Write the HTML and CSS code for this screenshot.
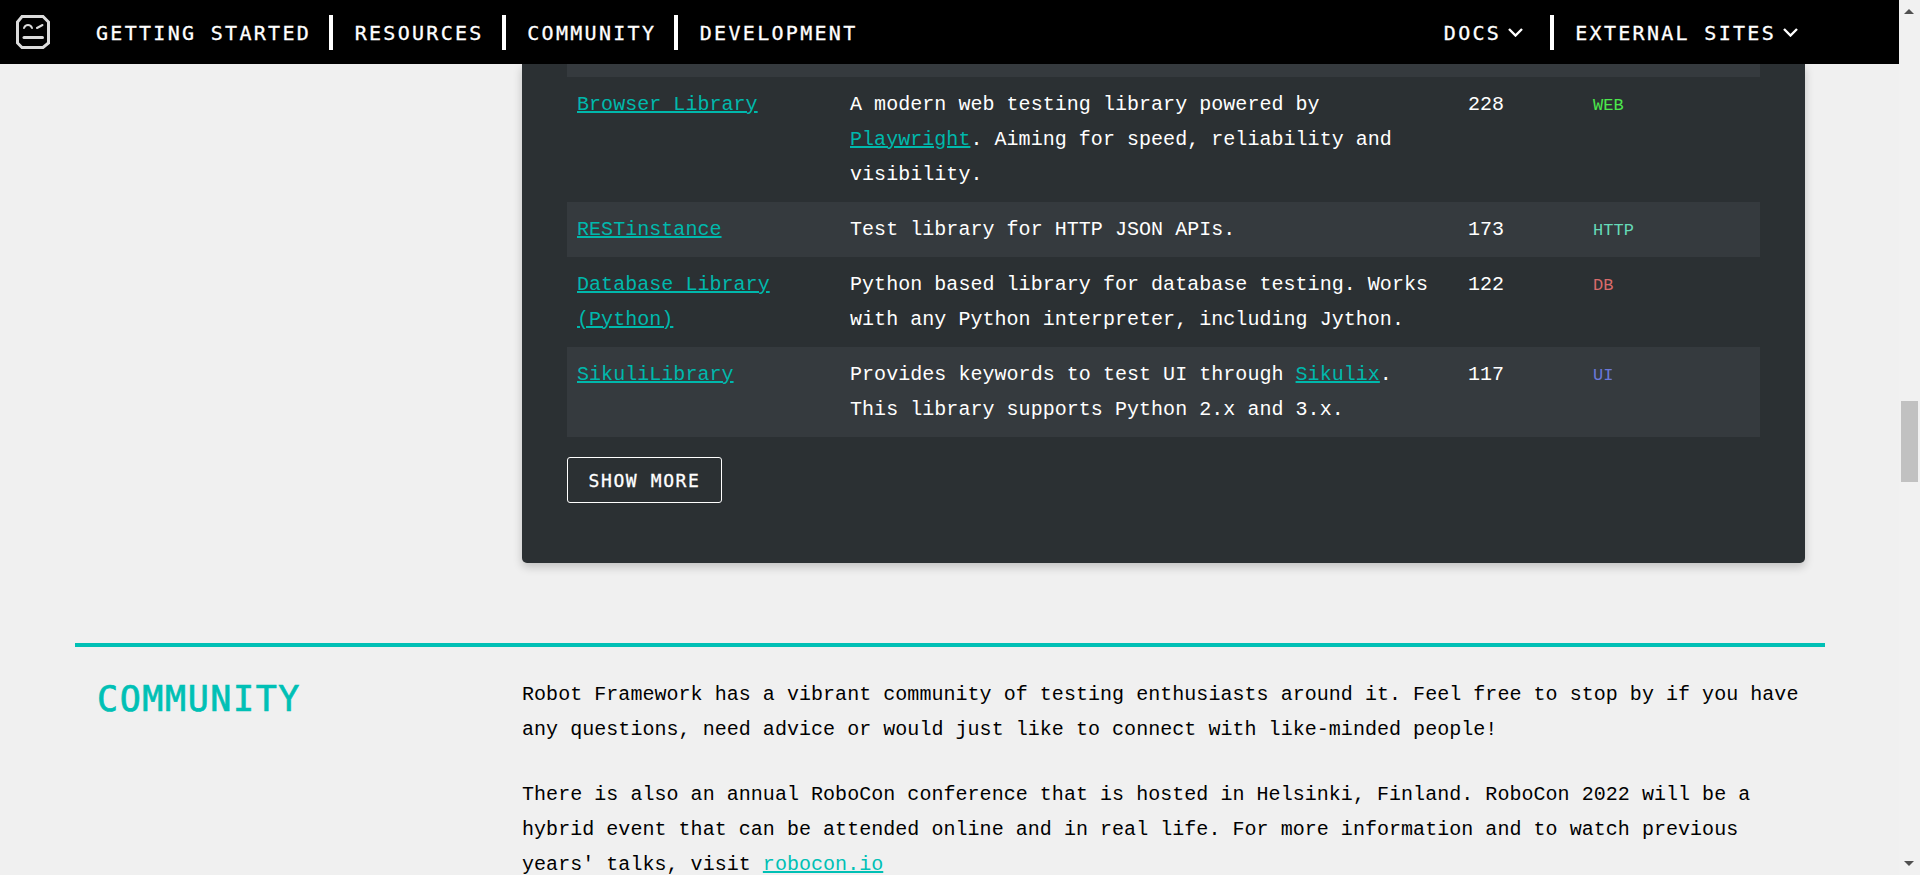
FILE: index.html
```html
<!DOCTYPE html>
<html lang="en">

<head>
    <meta charset="UTF-8">
    <meta name="viewport" content="width=device-width, initial-scale=1.0">
    <title>Robot Framework</title>
    <link rel="stylesheet" href="styles.css">
</head>

<body>
    <div class="page">
        <header class="navbar">
            <a class="logo" href="#">
                <svg width="36" height="36" viewBox="0 0 36 36" fill="none" stroke="#dcdcdc" stroke-linecap="round">
                    <path d="M7 2.5 H28 L33.5 8 V29 L28 33.5 H7 L2.5 29 V8 Z" stroke-width="3"></path>
                    <path d="M9 14 C10.5 10 15.5 10 17 14" stroke-width="2"></path>
                    <path d="M22 14 L27.5 11" stroke-width="2"></path>
                    <path d="M9 23.5 H27.5" stroke-width="3"></path>
                </svg>
            </a>
            <nav class="nav-left">
                <a href="#">Getting Started</a>
                <a href="#">Resources</a>
                <a href="#">Community</a>
                <a href="#">Development</a>
            </nav>
            <nav class="nav-right">
                <a href="#">Docs
                    <svg width="15" height="9" viewBox="0 0 15 9" fill="none" stroke="#fff" stroke-width="2.4"><path d="M1 1 L7.5 7.5 L14 1"></path></svg>
                </a>
                <a href="#">External Sites
                    <svg width="15" height="9" viewBox="0 0 15 9" fill="none" stroke="#fff" stroke-width="2.4"><path d="M1 1 L7.5 7.5 L14 1"></path></svg>
                </a>
            </nav>
        </header>

        <main class="content">
            <div class="card">
                <table class="lib-table">
                    <colgroup>
                        <col class="col-name">
                        <col class="col-desc">
                        <col class="col-stars">
                        <col class="col-tag">
                    </colgroup>
                    <tbody>
                        <tr class="row-cut">
                            <td colspan="4"></td>
                        </tr>
                        <tr>
                            <td><a href="#">Browser Library</a></td>
                            <td>A modern web testing library powered by <a href="#">Playwright</a>. Aiming for speed, reliability and visibility.</td>
                            <td>228</td>
                            <td><span class="tag tag-web">WEB</span></td>
                        </tr>
                        <tr>
                            <td><a href="#">RESTinstance</a></td>
                            <td>Test library for HTTP JSON APIs.</td>
                            <td>173</td>
                            <td><span class="tag tag-http">HTTP</span></td>
                        </tr>
                        <tr>
                            <td><a href="#">Database Library (Python)</a></td>
                            <td>Python based library for database testing. Works with any Python interpreter, including Jython.</td>
                            <td>122</td>
                            <td><span class="tag tag-db">DB</span></td>
                        </tr>
                        <tr>
                            <td><a href="#">SikuliLibrary</a></td>
                            <td>Provides keywords to test UI through <a href="#">Sikulix</a>. This library supports Python 2.x and 3.x.</td>
                            <td>117</td>
                            <td><span class="tag tag-ui">UI</span></td>
                        </tr>
                    </tbody>
                </table>
                <button class="show-more" type="button">Show more</button>
            </div>

            <section class="community">
                <h2>Community</h2>
                <div class="community-text">
                    <p>Robot Framework has a vibrant community of testing enthusiasts around it. Feel free to stop by if you have any questions, need advice or would just like to connect with like-minded people!</p>
                    <p>There is also an annual RoboCon conference that is hosted in Helsinki, Finland. RoboCon 2022 will be a hybrid event that can be attended online and in real life. For more information and to watch previous years' talks, visit <a href="#">robocon.io</a></p>
                </div>
            </section>
        </main>
    </div>

    <!-- drawn by hand, the page itself does not scroll -->
    <div class="scrollbar">
        <svg class="arrow arrow-up" width="10" height="5" viewBox="0 0 10 5"><path d="M0 5 L5 0 L10 5 Z" fill="#505050"></path></svg>
        <div class="thumb"></div>
        <svg class="arrow arrow-down" width="10" height="5" viewBox="0 0 10 5"><path d="M0 0 L5 5 L10 0 Z" fill="#505050"></path></svg>
    </div>
</body>

</html>
```

FILE: styles.css
```css
/* Basic layout */

html,
body {
    height: 100%;
}

body {
    margin: 0;
    display: flex;
    overflow: hidden;
    background-color: #f0f0f0;
    color: #000;
    font-family: 'Liberation Mono', 'Courier New', monospace;
    font-size: 20px;
    line-height: 35px;
    letter-spacing: 0.04px;
}

.page {
    width: 1899px;
    height: 875px;
    overflow: hidden;
}

a {
    color: #00c0b5;
}

/* Top bar */

.navbar {
    display: flex;
    align-items: center;
    height: 64px;
    padding-left: 15px;
    background-color: #000;
    font-family: 'DejaVu Sans Mono', monospace;
    font-size: 20px;
    letter-spacing: 2.3px;
    text-transform: uppercase;
    -webkit-text-stroke: 0.3px #fff;
}

.navbar a {
    color: #fff;
    text-decoration: none;
}

.logo {
    display: flex;
    margin-right: 45px;
}

.nav-left,
.nav-right {
    display: flex;
    align-items: center;
}

.nav-left a,
.nav-right a {
    display: flex;
    align-items: center;
    height: 33px;
    padding-top: 2px;
    border-right: 4px solid #fff;
}

.nav-left a {
    padding-right: 18px;
    margin-right: 21.5px;
}

.nav-right a {
    padding-right: 27px;
    margin-right: 21px;
}

.nav-left a:last-child,
.nav-right a:last-child {
    border-right: none;
    padding-right: 0;
    margin-right: 0;
}

.nav-right {
    margin-left: auto;
    padding-right: 101px;
}

.nav-right svg {
    margin: 0 0 2px 7px;
}

/* Dark card with the library table */

.content {
    display: flex;
    flex-direction: column;
}

.card {
    box-sizing: border-box;
    width: 1283px;
    height: 499px;
    margin-left: 522px;
    padding: 0 45px;
    background-color: #2b3033;
    border-radius: 0 0 5px 5px;
    box-shadow: 0 4px 10px rgba(0, 0, 0, 0.2);
    color: #fff;
}

.card a {
    color: #00b8ac;
}

.lib-table {
    width: 1193px;
    table-layout: fixed;
    border-collapse: collapse;
}

.col-name {
    width: 273px;
}

.col-desc {
    width: 618px;
}

.col-stars {
    width: 125px;
}

.lib-table td {
    padding: 10px;
    vertical-align: top;
}

.lib-table tr:nth-child(odd) {
    background-color: #353a3e;
}

.lib-table .row-cut td {
    height: 13px;
    padding: 0;
}

.tag {
    font-size: 17px;
    line-height: 1;
}

.tag-web {
    color: #4ce84c;
}

.tag-http {
    color: #66dbb8;
}

.tag-db {
    color: #d96b6b;
}

.tag-ui {
    color: #6a78d8;
}

.show-more {
    display: block;
    width: 155px;
    height: 46px;
    margin-top: 20px;
    padding: 0;
    background: transparent;
    border: 1px solid #fff;
    border-radius: 3px;
    color: #fff;
    font-family: 'DejaVu Sans Mono', monospace;
    font-size: 18px;
    letter-spacing: 1.6px;
    text-transform: uppercase;
    -webkit-text-stroke: 0.3px #fff;
}

/* Community section */

.community {
    display: flex;
    width: 1750px;
    margin: 80px 0 0 75px;
    padding-top: 30px;
    border-top: 4px solid #00c0b5;
}

.community h2 {
    width: 425px;
    margin: 4px 0 0;
    padding-left: 22px;
    color: #00c0b5;
    font-family: 'DejaVu Sans Mono', monospace;
    font-size: 35px;
    font-weight: normal;
    line-height: 36px;
    letter-spacing: 1.6px;
    text-transform: uppercase;
    -webkit-text-stroke: 0.7px #00c0b5;
}

.community-text {
    width: 1283px;
}

.community-text p {
    margin: 0 0 30px;
}

/* Fake scrollbar */

.scrollbar {
    position: relative;
    flex: 1;
    background-color: #f1f1f1;
}

.thumb {
    position: absolute;
    top: 401px;
    left: 2px;
    width: 17px;
    height: 81px;
    background-color: #c1c1c1;
}

.arrow {
    position: absolute;
    left: 5px;
}

.arrow-up {
    top: 9px;
}

.arrow-down {
    bottom: 9px;
}
```
